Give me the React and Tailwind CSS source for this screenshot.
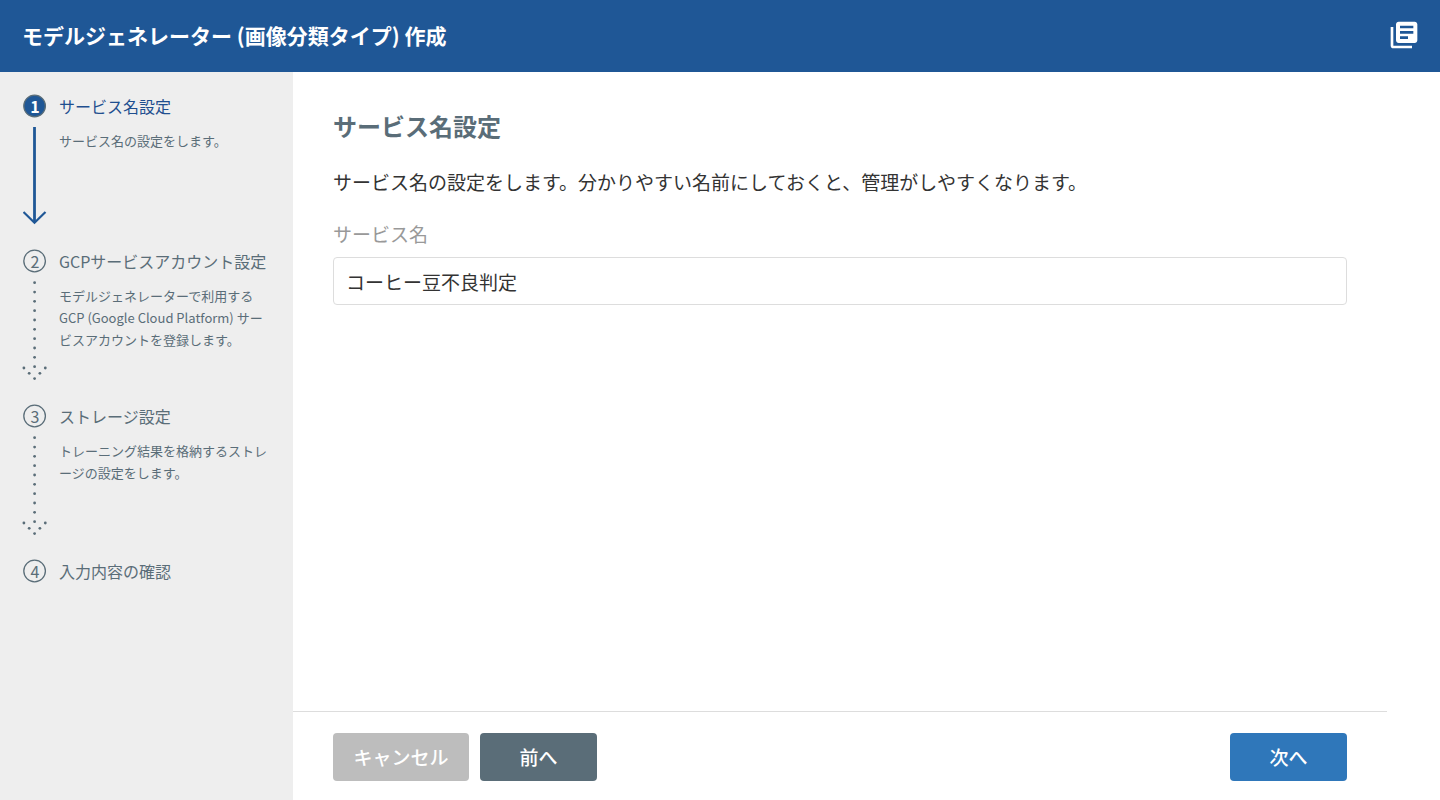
import React, { useState } from "react";
import { MdLibraryBooks } from "react-icons/md";

const STEPS = [
  { title: "サービス名設定", text: "サービス名の設定をします。" },
  {
    title: "GCPサービスアカウント設定",
    text: "モデルジェネレーターで利用するGCP (Google Cloud Platform) サービスアカウントを登録します。",
  },
  { title: "ストレージ設定", text: "トレーニング結果を格納するストレージの設定をします。" },
  { title: "入力内容の確認" },
];

function SolidArrow() {
  return (
    <svg width="24" height="100" viewBox="0 0 24 100" fill="none" stroke="#1f5796" aria-hidden="true">
      <path d="M11.5 2v95" strokeWidth="2.8" />
      <path d="M.5 87l11 10.8 11-10.8" strokeWidth="2.2" />
    </svg>
  );
}

const HEAD_DOTS = [[0.9, 88], [22.3, 88], [6.2, 93.3], [16.9, 93.3], [11.6, 98.6]];

function DottedArrow() {
  return (
    <svg width="24" height="100" viewBox="0 0 24 100" fill="#5a6d78" className="overflow-visible" aria-hidden="true">
      {Array.from({ length: 10 }, (_, i) => (
        <circle key={i} cx="11.6" cy={2.7 + i * 9.33} r="1.4" />
      ))}
      {HEAD_DOTS.map(([x, y]) => (
        <circle key={y + "-" + x} cx={x} cy={y} r="1.4" />
      ))}
    </svg>
  );
}

function Step({ step, number, active, last }) {
  return (
    <li className={last ? "flex gap-3" : "flex gap-3 min-h-[155px]"} aria-current={active ? "step" : undefined}>
      <div className="flex flex-col gap-[7px] w-6 shrink-0">
        <div className="relative w-6 h-6 grid place-items-center">
          <svg width="24" height="24" viewBox="0 0 24 24" className="absolute inset-0" aria-hidden="true">
            <circle
              cx="11.6"
              cy="12"
              r="10.8"
              fill={active ? "#1f5796" : "none"}
              stroke="#5a6d78"
              strokeWidth="1.3"
            />
          </svg>
          <span
            className={
              active
                ? "relative text-base leading-6 font-bold text-white"
                : "relative text-base leading-6 text-[#5a6d78]"
            }
          >
            {number}
          </span>
        </div>
        {!last && (active ? <SolidArrow /> : <DottedArrow />)}
      </div>
      <div className="flex-1 min-w-0">
        <h2 className={active ? "text-base leading-6 text-[#1f4f8f]" : "text-base leading-6 text-[#5a6d78]"}>
          {step.title}
        </h2>
        {step.text && <p className="mt-3 text-[13px] leading-[22px] text-[#5a6d78]">{step.text}</p>}
      </div>
    </li>
  );
}

export default function App() {
  const [name, setName] = useState("コーヒー豆不良判定");

  return (
    <div
      lang="ja"
      className="min-h-screen flex flex-col bg-white text-[#333] font-['Noto_Sans_CJK_JP',sans-serif]"
    >
      <header className="h-18 shrink-0 pl-[22px] pr-5 flex items-center justify-between bg-[#1f5796] text-white">
        <h1 className="text-[21px] font-bold">モデルジェネレーター (画像分類タイプ) 作成</h1>
        <a href="#docs" aria-label="ドキュメント" className="pb-0.5">
          <MdLibraryBooks size={32} />
        </a>
      </header>

      <div className="flex-1 flex">
        <aside className="w-[293px] shrink-0 bg-[#eee] pt-[22px] pl-[23px] pr-5">
          <ol>
            {STEPS.map((step, i) => (
              <Step key={step.title} step={step} number={i + 1} active={i === 0} last={i === STEPS.length - 1} />
            ))}
          </ol>
        </aside>

        <form className="flex-1 min-w-0 mr-[53px] flex flex-col" onSubmit={(e) => e.preventDefault()}>
          <main className="flex-1 px-10 pt-9">
            <h2 className="text-2xl leading-9 font-bold text-[#5a6d78]">サービス名設定</h2>
            <p className="mt-6 text-[19px] leading-7">
              サービス名の設定をします。分かりやすい名前にしておくと、管理がしやすくなります。
            </p>
            <label htmlFor="service-name" className="block mt-6 text-[19px] leading-7 text-[#999]">
              サービス名
            </label>
            <input
              id="service-name"
              type="text"
              value={name}
              onChange={(e) => setName(e.target.value)}
              className="mt-[9px] w-full h-12 px-3 text-[19px] border border-[#ddd] rounded-sm outline-none focus:border-[#2f77ba]"
            />
          </main>

          <footer className="px-10 pt-[21px] pb-[19px] flex gap-[11px] border-t border-[#ddd] text-[19px] text-white">
            <button type="button" className="h-12 w-[136px] rounded-sm bg-[#bdbdbd] font-medium">キャンセル</button>
            <button type="button" className="h-12 w-[117px] rounded-sm bg-[#5a6d78] font-medium">前へ</button>
            <button type="submit" className="h-12 w-[117px] rounded-sm bg-[#2f77ba] font-medium ml-auto">次へ</button>
          </footer>
        </form>
      </div>
    </div>
  );
}
